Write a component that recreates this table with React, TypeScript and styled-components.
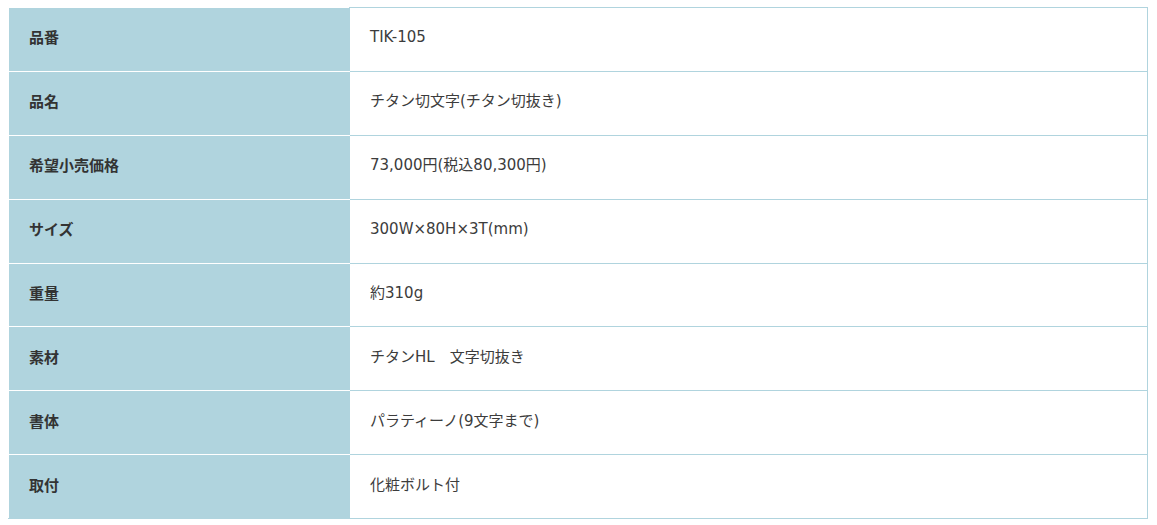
import React from "react";
import styled, { createGlobalStyle } from "styled-components";

const Global = createGlobalStyle`
  html, body { margin: 0; padding: 0; background: #ffffff; }
  body { font-family: "Noto Sans CJK JP", "Noto Sans", sans-serif; color: #333333; }
`;

const Wrap = styled.div`
  padding: 7px 9px 0 8px;
`;

const Table = styled.table`
  width: 1140px;
  border-collapse: collapse;
  table-layout: fixed;
`;

const Row = styled.tr`
  height: 63.875px;
`;

const Head = styled.th<{ $last?: boolean }>`
  width: 320px;
  background: #b0d4de;
  color: #333333;
  font-size: 15px;
  font-weight: 700;
  text-align: left;
  line-height: 20px;
  padding: 0 0 4px 20px;
  border-top: 1px solid #ffffff;
  border-left: 1px solid #ffffff;
  border-bottom: 1px solid ${(p) => (p.$last ? "#b0d4de" : "#ffffff")};
  border-right: 1px solid #b0d4de;
`;

const Cell = styled.td`
  font-family: "DejaVu Sans", "Noto Sans CJK JP", sans-serif;
  font-size: 15px;
  font-weight: 400;
  line-height: 20px;
  color: #3c3c3c;
  padding: 0 0 4px 20px;
  border: 1px solid #b0d4de;
`;

const rows: [string, string][] = [
  ["品番", "TIK-105"],
  ["品名", "チタン切文字(チタン切抜き)"],
  ["希望小売価格", "73,000円(税込80,300円)"],
  ["サイズ", "300W×80H×3T(mm)"],
  ["重量", "約310g"],
  ["素材", "チタンHL\u3000文字切抜き"],
  ["書体", "パラティーノ(9文字まで)"],
  ["取付", "化粧ボルト付"],
];

export default function App() {
  return (
    <Wrap>
      <Global />
      <Table>
        <tbody>
          {rows.map(([k, v], i) => (
            <Row key={k}>
              <Head $last={i === rows.length - 1}>{k}</Head>
              <Cell>{v}</Cell>
            </Row>
          ))}
        </tbody>
      </Table>
    </Wrap>
  );
}
